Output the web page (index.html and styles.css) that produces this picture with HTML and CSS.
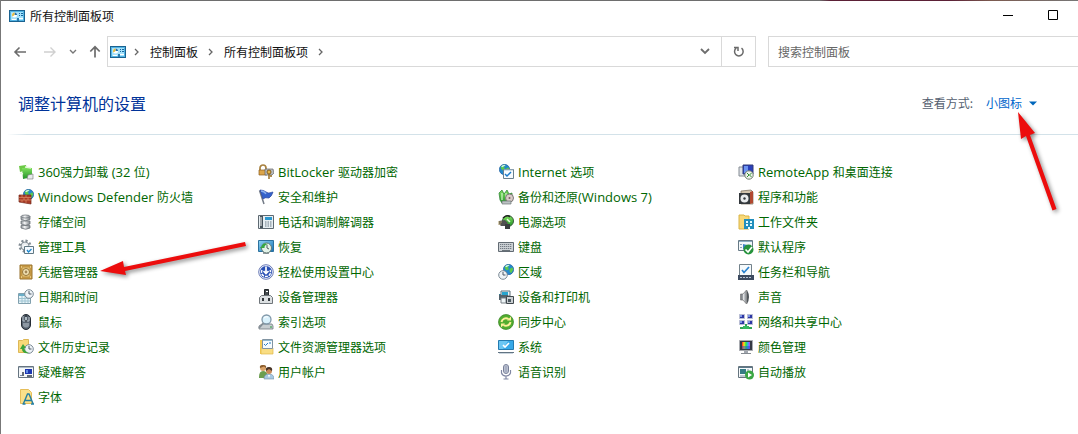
FILE: index.html
```html
<!DOCTYPE html>
<html lang="zh-CN">
<head>
<meta charset="utf-8">
<title>所有控制面板项</title>
<link rel="stylesheet" href="styles.css">
</head>
<body>
<svg class="defs" aria-hidden="true">
  <defs>
    <linearGradient id="blue" x1="0" y1="0" x2="1" y2="1"><stop offset="0" stop-color="#8fd6f5"/><stop offset="1" stop-color="#1672b8"/></linearGradient>
    <linearGradient id="grey" x1="0" y1="0" x2="1" y2="0"><stop offset="0" stop-color="#8b9096"/><stop offset=".4" stop-color="#f4f5f6"/><stop offset="1" stop-color="#7d8288"/></linearGradient>
    <linearGradient id="green" x1="0" y1="0" x2="0" y2="1"><stop offset="0" stop-color="#7ee05c"/><stop offset="1" stop-color="#23912a"/></linearGradient>
    <linearGradient id="rainbow" x1="0" y1="0" x2="1" y2="0"><stop offset="0" stop-color="#f22"/><stop offset=".25" stop-color="#fd2"/><stop offset=".5" stop-color="#2e4"/><stop offset=".75" stop-color="#3af"/><stop offset="1" stop-color="#c3e"/></linearGradient>
    <symbol id="panel" viewBox="0 0 16 14">
      <rect x=".5" y="1.5" width="15" height="11" fill="#52b4e4" stroke="#1b6290"/>
      <rect x="2" y="3" width="12" height="8" fill="#a5e1fa"/>
      <circle cx="5.5" cy="6" r="2.5" fill="#fff"/><path d="M5.500 6V3.500A2.500 2.500 0 0 1 8 6z" fill="#236fae"/><path d="M5.500 6L3.500 7.500A2.500 2.500 0 0 1 5.500 3.500z" fill="#e3b93c"/>
      <path d="M10 4.500h1M12 4.500h2M10 6.500h1M12 6.500h2" stroke="#17679f"/><path d="M3 10.500h4M10 9.500h4" stroke="#fff"/><path d="M8 9h2v3H8z" fill="#2b79ad"/>
    </symbol>
    <symbol id="globe" viewBox="0 0 10 10">
      <circle cx="5" cy="5" r="4.700" fill="#2388ce" stroke="#1c5a9b" stroke-width=".6"/>
      <path d="M1.500 2.500Q4 0 6 1L4.500 3 5.500 4.500 3.500 6 2 4.500zM6 4.500L8.500 3 9.300 5 7.500 8.500 6 7z" fill="#5cc94e"/><path d="M2 2Q4 .5 6 1.200L3 3z" fill="#d2f2fb"/>
    </symbol>
    <symbol id="clock" viewBox="0 0 10 10">
      <circle cx="5" cy="5" r="4.300" fill="#eef3f7" stroke="#7d8b96"/><path d="M5 2v3H7.500" fill="none" stroke="#4c5966"/>
    </symbol>
  </defs>
</svg>

<div class="window">
  <header class="titlebar">
    <svg class="panel-icon"><use href="#panel"/></svg>
    <h1 class="window-title">所有控制面板项</h1>
    <div class="window-buttons">
      <button type="button" class="window-button" aria-label="最小化"><svg width="11" height="11"><path d="M0 5.500h10" stroke="#000"/></svg></button>
      <button type="button" class="window-button" aria-label="最大化"><svg width="11" height="11"><path d="M.5.500h9v9h-9z" fill="none" stroke="#000"/></svg></button>
    </div>
  </header>

  <nav class="navbar" aria-label="导航">
    <div class="nav-buttons">
      <button type="button" class="nav-button" aria-label="后退"><svg width="14" height="12"><path d="M13 6H2M6.500 1.500L2 6l4.500 4.500" fill="none" stroke="#6c6c6c" stroke-width="1.600"/></svg></button>
      <button type="button" class="nav-button nav-forward" aria-label="前进" disabled><svg width="14" height="12"><path d="M1 6h11M7.500 1.500L12 6l-4.500 4.500" fill="none" stroke="#d0d0d0" stroke-width="1.400"/></svg></button>
      <button type="button" class="nav-button nav-recent" aria-label="最近浏览的位置"><svg width="8" height="6"><path d="M1 1l3 3 3-3" fill="none" stroke="#777" stroke-width="1.400"/></svg></button>
      <button type="button" class="nav-button" aria-label="上移"><svg width="12" height="13"><path d="M6 12.500V2M1.300 6.500L6 1.800l4.700 4.700" fill="none" stroke="#6c6c6c" stroke-width="1.700"/></svg></button>
    </div>
    <div class="address">
      <svg class="panel-icon"><use href="#panel"/></svg>
      <svg class="chevron" viewBox="0 0 6 8"><path d="M1 1l3 3-3 3"/></svg>
      <a class="crumb" href="#">控制面板</a>
      <svg class="chevron" viewBox="0 0 6 8"><path d="M1 1l3 3-3 3"/></svg>
      <a class="crumb" href="#">所有控制面板项</a>
      <svg class="chevron" viewBox="0 0 6 8"><path d="M1 1l3 3-3 3"/></svg>
      <button type="button" class="history" aria-label="以前的位置"><svg width="10" height="7"><path d="M1 1l4 4 4-4" fill="none" stroke="#6d6d6d" stroke-width="1.800"/></svg></button>
      <button type="button" class="refresh" aria-label="刷新"><svg width="12" height="13"><path d="M3.200 3.200A4.300 4.300 0 1 0 8.500 3.200M1 2.500h4V6" fill="none" stroke="#6a6a6a" stroke-width="1.500"/></svg></button>
    </div>
    <input class="search" type="search" aria-label="搜索控制面板" placeholder="搜索控制面板">
  </nav>

  <main>
    <div class="heading">
      <h2 class="heading-title">调整计算机的设置</h2>
      <label class="view-label" for="view">查看方式:</label>
      <div class="view">
        <select id="view" class="view-select"><option>类别</option><option>大图标</option><option selected>小图标</option></select>
        <svg width="8" height="5"><path d="M0 .5h8L4 4.500z" fill="#06b"/></svg>
      </div>
    </div>

    <ul class="items">
      <li><a class="item" href="#"><svg class="icon" viewBox="0 0 16 16"><path d="M1 2l7-1 1 5-7 2z" fill="#6cc946"/><path d="M4 4h10v9l-9 2z" fill="url(#green)"/><path d="M7 3l6 1M2 9l3 1" stroke="#e7f9dd" stroke-width="1.500"/><path d="M10 11l5-1v5H9z" fill="#e8eaec" stroke="#777" stroke-width=".6"/></svg><span><span class="latin">360</span>强力卸载<span class="latin"> (32 </span>位<span class="latin">)</span></span></a></li>
      <li><a class="item" href="#"><svg class="icon" viewBox="0 0 16 16"><path d="M2 6V4a3 3 0 0 1 6 0v2" fill="none" stroke="#a98240" stroke-width="1.700"/><path d="M1 6h8v5H1z" fill="#dca549" stroke="#8b5c1c" stroke-width=".7"/><path d="M7 5h8l1 4-2 2H7z" fill="#b6bbc0" stroke="#666" stroke-width=".7"/><circle cx="11" cy="8" r="2" fill="#e6b544" stroke="#845e1c"/><path d="M11 10v5M12 12h2" stroke="#976d23" stroke-width="1.500"/></svg><span><span class="latin">BitLocker </span>驱动器加密</span></a></li>
      <li><a class="item" href="#"><svg class="icon" viewBox="0 0 16 16"><use href="#globe" x="1" y="0" width="11" height="11"/><path d="M5.500 5.500h10v9h-10z" fill="#f6fbff" stroke="#69808e"/><path d="M6 6h9" stroke="#aac3d2"/><path d="M7 10l2 2 4-4" fill="none" stroke="#187aca" stroke-width="1.500"/></svg><span><span class="latin">Internet </span>选项</span></a></li>
      <li><a class="item" href="#"><svg class="icon" viewBox="0 0 16 16"><path d="M1 3h7v9H1z" fill="#dce1e6" stroke="#858c94"/><path d="M5 1h10v9H5z" fill="#2a40bb" stroke="#303b79"/><path d="M6 2h4v7H6z" fill="#6c93f1"/><circle cx="11" cy="11" r="4.200" fill="#eef2ed" stroke="#707c70"/><path d="M9 9l2 2-2 2M13.500 9l-2 2 2 2" fill="none" stroke="#30912d"/></svg><span><span class="latin">RemoteApp </span>和桌面连接</span></a></li>

      <li><a class="item" href="#"><svg class="icon" viewBox="0 0 16 16"><use href="#globe" x="5" y="0" width="11" height="11"/><path d="M1 6h12v9l-6-1-6-1z" fill="#a93b27" stroke="#71281b" stroke-width=".7"/><path d="M1 8.500h12M1 11h12M4 6v2.500M8 6v2.500M6 8.500V11M10 8.500V11M4 11v2.500M8 11v3" stroke="#e69a74" stroke-width=".6"/></svg><span><span class="latin">Windows Defender </span>防火墙</span></a></li>
      <li><a class="item" href="#"><svg class="icon" viewBox="0 0 16 16"><path d="M1.500 1.500L6 15" stroke="#737b86" stroke-width="1.500"/><path d="M2 1q4 0 6 2t7 0q-1 4-4 6-4-1-6 1z" fill="#3462cb" stroke="#27449c" stroke-width=".7"/><path d="M3 2q3 0 5 3" stroke="#8cb2f0" stroke-width="1.300" fill="none"/></svg><span>安全和维护</span></a></li>
      <li><a class="item" href="#"><svg class="icon" viewBox="0 0 16 16"><path d="M1 4l3-3 2 4 3-4 2 4 3-1v8l-3 1-2 2-3-3-2 2-2-3z" fill="url(#green)" stroke="#267c2f" stroke-width=".7"/><path d="M4 4v7M8 4v6" stroke="#d5f9c9" stroke-width="1.200"/><circle cx="11.500" cy="9" r="4" fill="#d9cbc8" stroke="#7e7878"/><circle cx="11.500" cy="9" r="1" fill="#795f61"/><path d="M4 12h9v3H4z" fill="#bcc2c4" stroke="#6e7576" stroke-width=".7"/></svg><span>备份和还原<span class="latin">(Windows 7)</span></span></a></li>
      <li><a class="item" href="#"><svg class="icon" viewBox="0 0 16 16"><path d="M3 2l10-1 2 2v12H3z" fill="#d3c5ae" stroke="#766a59" stroke-width=".7"/><path d="M12 3l3-1v12l-3 1z" fill="#b14830"/><path d="M1 4h11v11H1z" fill="#33383c"/><circle cx="6.500" cy="9.500" r="4" fill="#e8ebed"/><circle cx="6.500" cy="9.500" r="1.200" fill="#33383c"/></svg><span>程序和功能</span></a></li>

      <li><a class="item" href="#"><svg class="icon" viewBox="0 0 16 16"><g fill="url(#grey)" stroke="#70767c" stroke-width=".8"><path d="M3 2.500v3q5 2.500 9 0v-3zM3 7v3q5 2.500 9 0V7zM3 11.500v2.500q5 2.500 9 0v-2.500z"/><ellipse cx="7.500" cy="2.500" rx="4.500" ry="1.500"/></g></svg><span>存储空间</span></a></li>
      <li><a class="item" href="#"><svg class="icon" viewBox="0 0 16 16"><path d="M.5 1.500h15v13H.5z" fill="#e7eef2" stroke="#5e6971"/><path d="M2 2h3v12H2z" fill="#46525b"/><path d="M7 3h7v3H7z" fill="#2b98cf"/><path d="M7 8h7M7 10h7M7 12h7" stroke="#687985" stroke-dasharray="1.500 1"/><path d="M3 3v9" stroke="#fff"/></svg><span>电话和调制解调器</span></a></li>
      <li><a class="item" href="#"><svg class="icon" viewBox="0 0 16 16"><circle cx="10" cy="7" r="5.500" fill="url(#green)" stroke="#385d3a"/><path d="M5 4q4-4 7-1" fill="none" stroke="#252525" stroke-width="1.500"/><path d="M1 7l6-1 3 3-3 3H3L1 10z" fill="#505050"/><path d="M0 8h4M0 10h3" stroke="#ab9966"/><path d="M7 10h5v5H7z" fill="#3a3d3e"/><path d="M9 5l3 3" stroke="#e9f7dc" stroke-width="1.500"/></svg><span>电源选项</span></a></li>
      <li><a class="item" href="#"><svg class="icon" viewBox="0 0 16 16"><path d="M1 1h5l1 1h4v13H1z" fill="#f8d978" stroke="#d9b447"/><path d="M6 5h10v10H6z" fill="#218fbd"/><path d="M8 7h2v2H8zM12 7h2v2h-2zM8 10h2v2H8zM12 10h2v2h-2zM10 13h2v2h-2z" fill="#e6fbff"/></svg><span>工作文件夹</span></a></li>

      <li><a class="item" href="#"><svg class="icon" viewBox="0 0 16 16"><circle cx="7" cy="7" r="5" fill="none" stroke="#818b93" stroke-width="3" stroke-dasharray="2 1.900"/><circle cx="7" cy="7" r="4" fill="#e8ecef" stroke="#89939a"/><circle cx="7" cy="7" r="1.500" fill="#fff"/><path d="M6.500 7.500h9v7h-9z" fill="#f5faff" stroke="#617985"/><path d="M9 11l1.500 2 3-3" fill="none" stroke="#1b86cb" stroke-width="1.300"/></svg><span>管理工具</span></a></li>
      <li><a class="item" href="#"><svg class="icon" viewBox="0 0 16 16"><path d="M.5 1.500h15v11H.5z" fill="url(#blue)" stroke="#2d719d"/><path d="M5 14h6" stroke="#737f86" stroke-width="1.500"/><circle cx="8.500" cy="9" r="5" fill="#e3f3e9" stroke="#637a74"/><path d="M3 9h3.500Q6 6 10 5 4 3 3.500 8H2l2.500 4z" fill="#37a744"/><path d="M9 6v3l2 1" fill="none" stroke="#4e5e60"/></svg><span>恢复</span></a></li>
      <li><a class="item" href="#"><svg class="icon" viewBox="0 0 16 16"><path d="M.5 3.500h15v9H.5z" fill="#ccd1d5" stroke="#626b73"/><path d="M2 5.500h12M2 7.500h12M2 9.500h12" stroke="#737c84" stroke-dasharray="1.300 .7"/><path d="M4 11.500h8" stroke="#697279"/></svg><span>键盘</span></a></li>
      <li><a class="item" href="#"><svg class="icon" viewBox="0 0 16 16"><path d="M.5 1.500h14v10H.5z" fill="#f4f8fa" stroke="#667985"/><path d="M1 2.500h13" stroke="#8cadc2"/><path d="M5 5l4 1-1 5-3-1z" fill="#3d83c6"/><path d="M2 5.500h2M2 8.500h2" stroke="#8ba5b5"/><circle cx="10.500" cy="10.500" r="5" fill="#26933c"/><path d="M7.500 10.500l2.500 2.500 4-5" fill="none" stroke="#fff" stroke-width="1.700"/></svg><span>默认程序</span></a></li>

      <li><a class="item" href="#"><svg class="icon" viewBox="0 0 16 16"><path d="M2 1h12v14H2z" fill="#d4a449" stroke="#96712d"/><path d="M4 3h8v10H4z" fill="#eac676" stroke="#a8823c" stroke-width=".7"/><circle cx="8" cy="8" r="3.500" fill="#f3e4b6" stroke="#957437"/><circle cx="8" cy="8" r="1.400" fill="#a28755"/><path d="M3 3h1M12 3h1M3 13h1M12 13h1" stroke="#fff0b7"/></svg><span>凭据管理器</span></a></li>
      <li><a class="item" href="#"><svg class="icon" viewBox="0 0 16 16"><circle cx="8" cy="8" r="7.300" fill="#f1f5ff" stroke="#6a7ab5"/><circle cx="8" cy="8" r="6" fill="#294fb4"/><path d="M8 2.500v7M5.500 7L8 9.500 10.500 7" fill="none" stroke="#fff" stroke-width="1.700"/><path d="M4 6a4.500 4.500 0 1 0 8 0" fill="none" stroke="#fff" stroke-width="1.500" stroke-dasharray="3 1"/></svg><span>轻松使用设置中心</span></a></li>
      <li><a class="item" href="#"><svg class="icon" viewBox="0 0 16 16"><use href="#globe" x="5" y="0" width="11" height="11"/><use href="#clock" x="0" y="6" width="10" height="10"/></svg><span>区域</span></a></li>
      <li><a class="item" href="#"><svg class="icon" viewBox="0 0 16 16"><path d="M1.500.500h12v11h-12z" fill="#f6fafc" stroke="#72818a"/><path d="M4 6l2 2.500L11 3" fill="none" stroke="#2a82cf" stroke-width="1.700"/><path d="M0 11h16v5H0z" fill="#3d4b60"/><path d="M2 13.500h12" stroke="#b6c3d3" stroke-dasharray="2 1"/></svg><span>任务栏和导航</span></a></li>

      <li><a class="item" href="#"><svg class="icon" viewBox="0 0 16 16"><path d="M.5 4.500h12v10H.5z" fill="#e7f4f9" stroke="#81a0ae"/><path d="M1 5h11v2H1z" fill="#6bafc9"/><path d="M1 9.500h11M1 12h11M4 7v7M7 7v7M10 7v7" stroke="#9fc4d2"/><use href="#clock" x="6" y="0" width="10" height="10"/></svg><span>日期和时间</span></a></li>
      <li><a class="item" href="#"><svg class="icon" viewBox="0 0 16 16"><path d="M6.500.500h4v6h-4z" fill="#444a4e" stroke="#22272b"/><path d="M8 2h2v1H8z" fill="#fff"/><path d="M1.500 8.500l2-2h9l2 2v6h-13z" fill="#dce0e2" stroke="#70767b"/><path d="M4 9h2v3H4zM10 9h2v3h-2z" fill="#33383c"/></svg><span>设备管理器</span></a></li>
      <li><a class="item" href="#"><svg class="icon" viewBox="0 0 16 16"><path d="M1 5h8v5H1z" fill="#347c91"/><path d="M3 2h9v5H3z" fill="#e7f3f7" stroke="#60717a"/><path d="M4 3h6v3H4z" fill="#27a4ce"/><path d="M1 6h9v5H1z" fill="#53616a"/><path d="M3 9h5v5H3z" fill="#eef5f7" stroke="#788086"/><path d="M8.500 7.500h7v7h-7z" fill="#c9ced1" stroke="#41484d"/><path d="M10 10h3v3h-3z" fill="#4d5a62"/></svg><span>设备和打印机</span></a></li>
      <li><a class="item" href="#"><svg class="icon" viewBox="0 0 16 16"><path d="M8.500 1v14L5 11H2.500V5H5z" fill="url(#grey)" stroke="#777" stroke-width=".7"/><path d="M9 1q4 7 0 14z" fill="#4f555a"/><path d="M4 5v6" stroke="#51575c"/></svg><span>声音</span></a></li>

      <li><a class="item" href="#"><svg class="icon" viewBox="0 0 16 16"><rect x="3.500" y=".5" width="9" height="15" rx="4.500" fill="#576370" stroke="#252c34"/><path d="M5 2v5h6V3" fill="none" stroke="#bac4cd"/><path d="M8 1v7" stroke="#20252b"/><path d="M8 3v3" stroke="#dae7ef" stroke-width="1.500"/><path d="M5 9v3q3 3 6 0V9" fill="#8d98a3"/></svg><span>鼠标</span></a></li>
      <li><a class="item" href="#"><svg class="icon" viewBox="0 0 16 16"><path d="M1 12l3-2h10l1 2v3H1z" fill="#c7cdd1" stroke="#717980" stroke-width=".8"/><circle cx="8.500" cy="5.500" r="4.500" fill="#d9f1fc" stroke="#8198a9" stroke-width="1.300"/><path d="M5.500 9L1 14" stroke="#838e96" stroke-width="1.800"/><path d="M12 13h2" stroke="#27a33a"/><path d="M6 4q2-2 4-1" fill="none" stroke="#fff"/></svg><span>索引选项</span></a></li>
      <li><a class="item" href="#"><svg class="icon" viewBox="0 0 16 16"><circle cx="8" cy="8" r="7.500" fill="#52ad2f" stroke="#358223" stroke-width=".7"/><path d="M3.500 8a4.500 4.500 0 0 1 7-3M12.500 8a4.500 4.500 0 0 1-7 3" fill="none" stroke="#fff19b" stroke-width="2"/><path d="M9 6.500h4V2.500zM7 9.500H3v4z" fill="#fff19b"/></svg><span>同步中心</span></a></li>
      <li><a class="item" href="#"><svg class="icon" viewBox="0 0 16 16"><g fill="#2d36a4" stroke="#b8bdd2"><path d="M1.500.500h5v4h-5zM9.500.500h5v4h-5zM1.500 6.500h5v4h-5zM9.500 6.500h5v4h-5z"/></g><path d="M2 1h2v2H2zM10 1h2v2h-2zM2 7h2v2H2zM10 7h2v2h-2z" fill="#8098e6"/><path d="M8 10v4M2 14h12" stroke="#30a654" stroke-width="2"/><path d="M5 12h6v3H5z" fill="#36b861"/></svg><span>网络和共享中心</span></a></li>

      <li><a class="item" href="#"><svg class="icon" viewBox="0 0 16 16"><path d="M.5 1.500h4l1-1h5v13H.5z" fill="#f8d978" stroke="#ddb757"/><use href="#clock" x="6" y="5" width="10" height="10"/><path d="M2 10l3-5 3 4H6q1 4 5 5-7 1-7-4z" fill="#3ca53a"/></svg><span>文件历史记录</span></a></li>
      <li><a class="item" href="#"><svg class="icon" viewBox="0 0 16 16"><path d="M2 1h4v14H2z" fill="#f6cb55"/><path d="M3 9h12v6H3z" fill="#f9dd83" stroke="#dfb748" stroke-width=".7"/><path d="M4.500.500h10v9h-10z" fill="#f5fbff" stroke="#8194a2"/><path d="M5 1.500h9" stroke="#90b7cf"/><path d="M6 5l1.500 1.500L10 4M11 4h2" fill="none" stroke="#297cc1"/></svg><span>文件资源管理器选项</span></a></li>
      <li><a class="item" href="#"><svg class="icon" viewBox="0 0 16 16"><path d="M.5 1.500h15v9H.5z" fill="#36a8e8" stroke="#247bb0"/><path d="M1 2h9l-5 8H1z" fill="#6bc6f3"/><path d="M5 6l2 2 4-4" fill="none" stroke="#fff" stroke-width="1.600"/><path d="M0 13.500h16" stroke="#627483"/><path d="M1 14.500h14" stroke="#cbd6df"/></svg><span>系统</span></a></li>
      <li><a class="item" href="#"><svg class="icon" viewBox="0 0 16 16"><path d="M1.500 1.500h13v10h-13z" fill="#353944" stroke="#a8abb0"/><path d="M4 3h8v7H4z" fill="url(#rainbow)"/><path d="M4 7h8v3H4z" fill="#2547d3" opacity=".5"/><path d="M6 12h4v2H6z" fill="#a2a7af"/><path d="M3 14.500h10" stroke="#858b92"/></svg><span>颜色管理</span></a></li>

      <li><a class="item" href="#"><svg class="icon" viewBox="0 0 16 16"><path d="M.5 2.500h15v11H.5z" fill="#f4f7f9" stroke="#667480"/><path d="M1 3.500h14" stroke="#aebbc7"/><path d="M7 5h7v5H7z" fill="#1c36b0"/><path d="M8 6h2v3H8z" fill="#608ce4"/><path d="M4 8h2v4H4zM9 11h5v2H9z" fill="#626a77"/><path d="M2 11.500h2" stroke="#7587a8"/></svg><span>疑难解答</span></a></li>
      <li><a class="item" href="#"><svg class="icon" viewBox="0 0 16 16"><path d="M1 13q0-6 4-6t5 5v2H1z" fill="#6c9e50"/><circle cx="5" cy="4" r="3" fill="#d9a267"/><path d="M2 4q-1-3 3-3t3 3L6 2.500z" fill="#8a5c2d"/><path d="M6 15q0-5 5-5t5 5z" fill="#a7c8e1" stroke="#7590a6" stroke-width=".6"/><circle cx="11" cy="7" r="3" fill="#c98958"/><path d="M8 7q-1-4 3-4t3 4l-3-2z" fill="#473326"/><path d="M10 11l1 3 1-3" fill="#fff"/></svg><span>用户帐户</span></a></li>
      <li><a class="item" href="#"><svg class="icon" viewBox="0 0 16 16"><rect x="5.500" y=".5" width="5" height="9" rx="2.500" fill="#d8dce7" stroke="#777f98"/><path d="M6 3h4M6 5h4M6 7h4M8 1v8" stroke="#8790aa" stroke-width=".7"/><path d="M3.500 6v3q1 3 4.500 3t4.500-3V6M8 12v3M5.500 15h5" fill="none" stroke="#8087a3" stroke-width="1.200"/></svg><span>语音识别</span></a></li>
      <li><a class="item" href="#"><svg class="icon" viewBox="0 0 16 16"><path d="M.5 2.500h14v11H.5z" fill="#f6f9fb" stroke="#65747e"/><path d="M1 3h13v1H1z" fill="#5b7889"/><path d="M2 5h6v5H2z" fill="#347c83"/><path d="M9 6h2M9 8h2M2 12h6" stroke="#8298a6"/><circle cx="11.500" cy="11" r="4.500" fill="#3ba744"/><path d="M10 8.500l4 2.500-4 2.500z" fill="#fff"/></svg><span>自动播放</span></a></li>

      <li><a class="item" href="#"><svg class="icon" viewBox="0 0 16 16"><path d="M2.500.500h8l3 3v11h-11z" fill="#fae08a" stroke="#e6be5a"/><path d="M5.500 14.500L9.500 5h1.500l4 9.500M7 11.500h6M4.500 15h3M13 15h3" fill="none" stroke="#247fa1" stroke-width="1.400"/></svg><span>字体</span></a></li>
    </ul>
  </main>

  <svg class="pointer pointer-view" width="60" height="112" viewBox="0 0 60 112" aria-hidden="true"><path d="M8 7L11 34 16 31 42.500 105.500 46.500 104 20 30 25 28z" fill="#ec0d0d"/></svg>
  <svg class="pointer pointer-item" width="160" height="46" viewBox="0 0 160 46" aria-hidden="true"><path d="M3 33L29 37 28 33 149 8 148 4 27 29 26 23z" fill="#ec0d0d"/></svg>
</div>
</body>
</html>
```

FILE: styles.css
```css
* { box-sizing: border-box; }

body {
  margin: 0;
  background: #fff;
  color: #111;
  font: 12px/18px "Noto Sans CJK SC", sans-serif;
}

.defs { position: absolute; width: 0; height: 0; }

.window {
  position: relative;
  min-height: 100vh;
  overflow: hidden;
  border-left: 1px solid #777;
}

.window::before {
  content: "";
  display: block;
  height: 1px;
  background: linear-gradient(90deg, #6e6e6e 0 76%, #5b2036 77% 88%, #7c5b50 92%, #777 100%);
}

svg { display: block; flex: none; }

button {
  display: flex;
  align-items: center;
  justify-content: center;
  margin: 0;
  padding: 0;
  border: 0;
  background: none;
}

.titlebar {
  display: flex;
  align-items: center;
  height: 29px;
  padding-left: 8px;
}

.panel-icon { width: 16px; height: 14px; }

.window-title {
  margin: 0 0 0 5px;
  font-size: 12px;
  font-weight: 400;
}

.window-buttons { display: flex; margin-left: auto; }
.window-button { width: 45px; height: 29px; }
.window-buttons { padding-right: 2px; }

.navbar {
  display: flex;
  align-items: center;
  margin-top: 6px;
}

.nav-buttons {
  display: flex;
  align-items: center;
  width: 106px;
  padding-left: 12px;
  gap: 8px;
}

.nav-button { height: 30px; }
.nav-forward { margin-left: 8px; }
.nav-recent { margin: 0 4px; }

.address {
  display: flex;
  flex: 1;
  align-items: center;
  height: 31px;
  padding-left: 2px;
  border: 1px solid #d9d9d9;
}

.chevron {
  width: 6px;
  height: 8px;
  margin: 0 8px;
  fill: none;
  stroke: #666;
  stroke-width: 1.3;
}

.crumb { color: #111; text-decoration: none; padding: 0 2px; }
.history { width: 32px; height: 29px; margin-left: auto; }
.refresh { width: 34px; height: 29px; border-left: 1px solid #d9d9d9; }

.search {
  width: 310px;
  height: 31px;
  margin-left: 12px;
  padding: 0 9px;
  border: 1px solid #d9d9d9;
  border-right: 0;
  border-radius: 0;
  outline: 0;
  appearance: none;
  font: inherit;
}

.search::placeholder { color: #666; opacity: 1; }

.heading {
  display: flex;
  align-items: center;
  height: 68px;
  margin-left: 7px;
  padding: 5px 41px 0 10px;
  border-bottom: 1px solid;
  border-image: linear-gradient(90deg, #fff, #d3e2e9 20px) 1;
}

.heading-title {
  margin: 0;
  color: #003399;
  font-size: 16px;
  font-weight: 400;
  line-height: 24px;
}

.view-label { margin: 0 13px 0 auto; color: #555f70; }
.view { display: flex; align-items: center; gap: 6px; }

.view-select {
  padding: 0;
  border: 0;
  background: none;
  appearance: none;
  color: #0066cc;
  font: inherit;
}

.items {
  display: grid;
  grid-template-columns: repeat(auto-fill, 240px);
  grid-auto-rows: 25px;
  margin: 24px 0 0;
  padding: 0 0 0 17px;
  list-style: none;
}

.item {
  display: inline-flex;
  align-items: center;
  gap: 4px;
  height: 25px;
  color: #006600;
  text-decoration: none;
  white-space: pre;
}

.icon { width: 16px; height: 16px; }
.latin { font-family: "Open Sans", sans-serif; font-size: 13px; }

.pointer {
  position: absolute;
  filter: drop-shadow(2px 2px 2px rgb(0 0 0 / 45%));
  pointer-events: none;
}

.pointer-view { left: 1009px; top: 105px; }
.pointer-item { left: 96px; top: 238px; }
```
